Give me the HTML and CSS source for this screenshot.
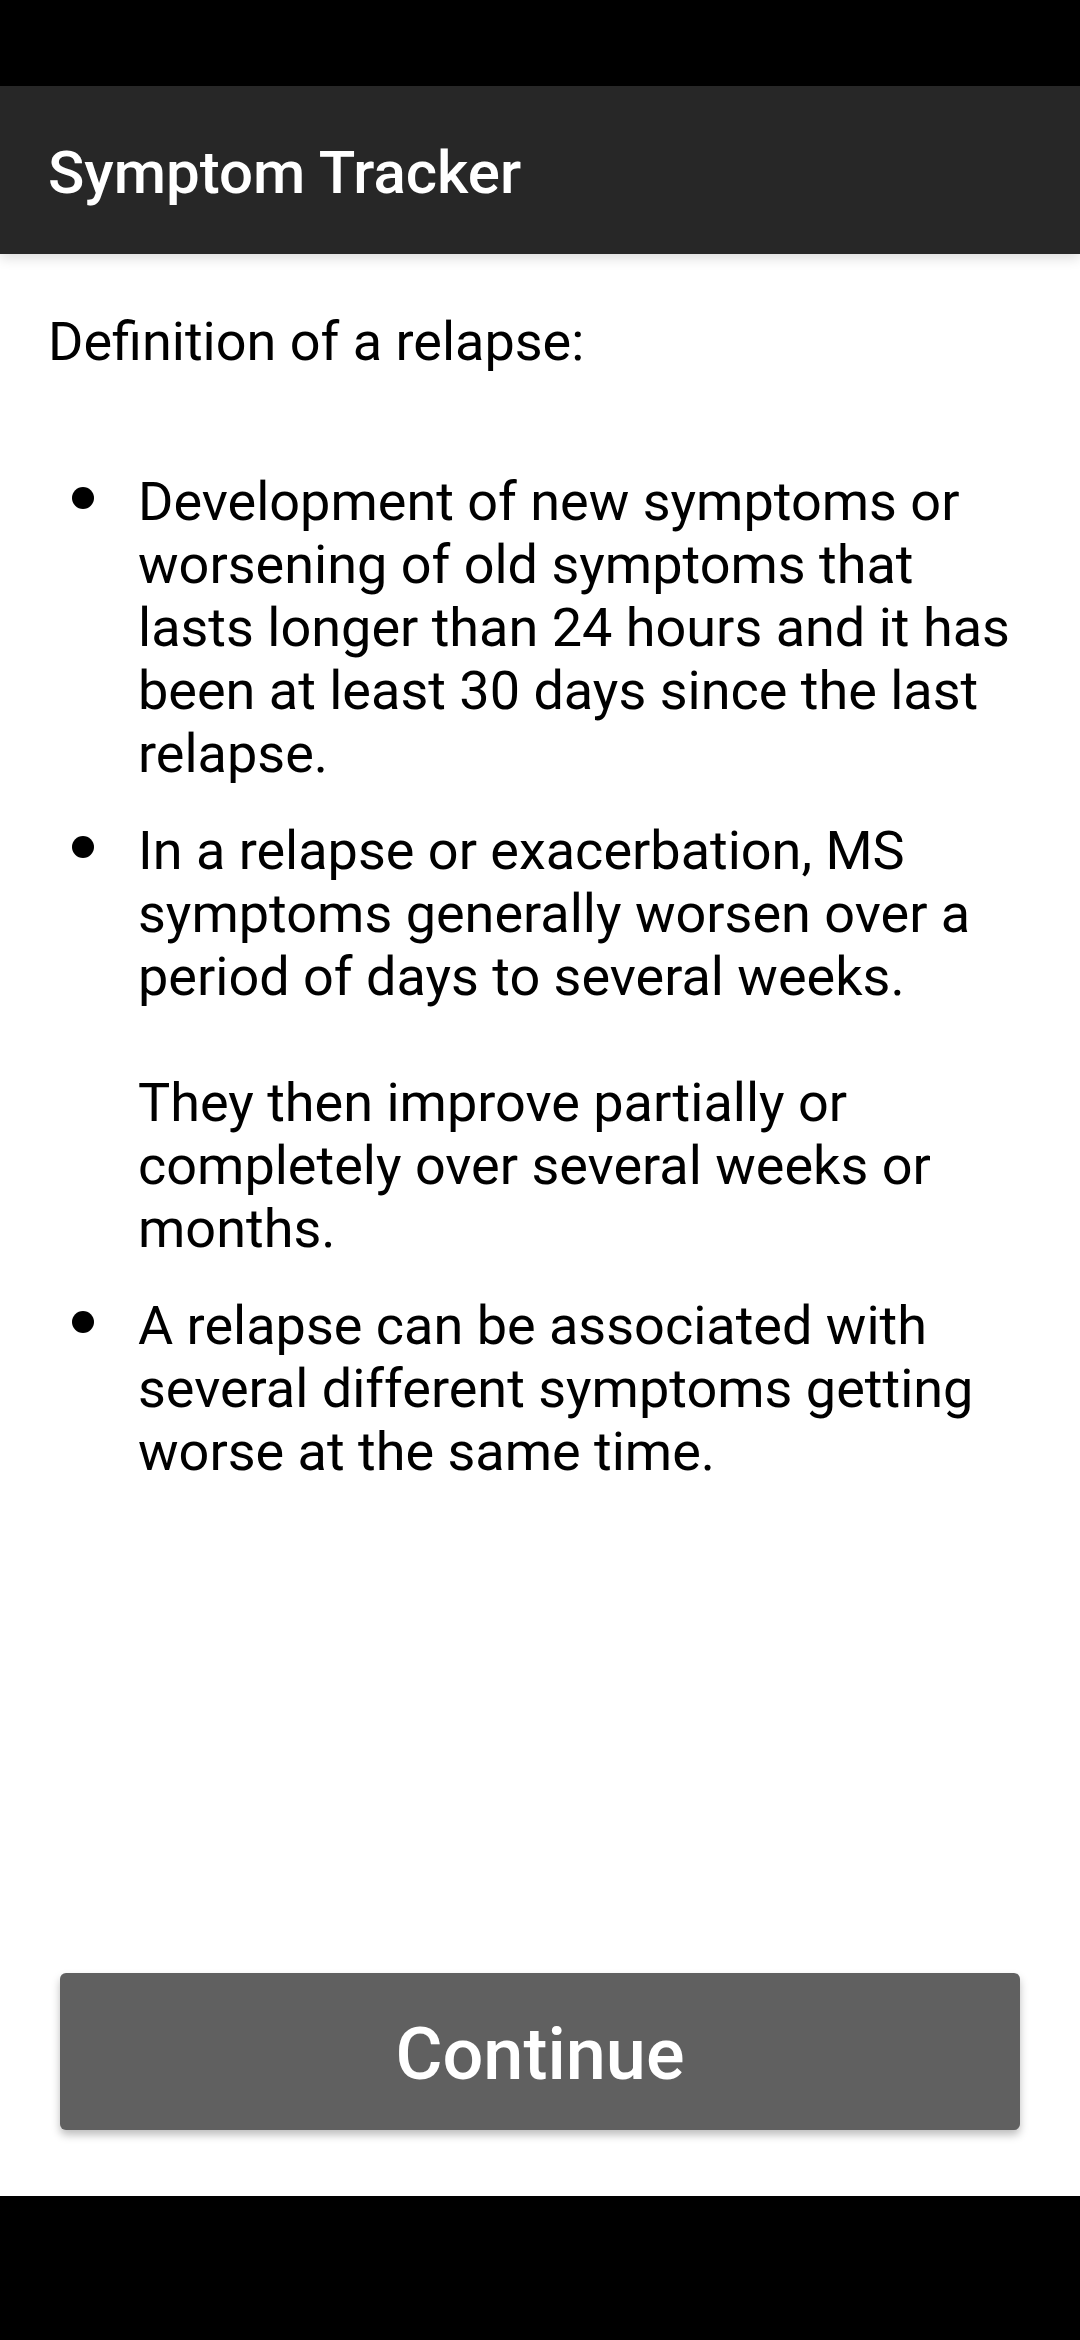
FILE: index.html
```html
<!DOCTYPE html>
<html lang="en">
<head>
<meta charset="utf-8">
<meta name="viewport" content="width=device-width">
<title>Symptom Tracker</title>
<link rel="stylesheet" href="styles.css">
</head>
<body>
<div class="screen">
<header class="app-bar"><h1 class="title">Symptom Tracker</h1></header>
<main class="content">
<p class="intro">Definition of a relapse:</p>
<ul class="list">
<li class="item"><p class="text">Development of new symptoms or worsening of old symptoms that lasts longer than 24 hours and it has been at least 30 days since the last relapse.</p></li>
<li class="item"><p class="text">In a relapse or exacerbation, MS symptoms generally worsen over a period of days to several weeks.</p><p class="text">They then improve partially or completely over several weeks or months.</p></li>
<li class="item"><p class="text">A relapse can be associated with several different symptoms getting worse at the same time.</p></li>
</ul>
<button class="continue" type="button">Continue</button>
</main>
</div>
</body>
</html>
```
FILE: styles.css
```css
* { box-sizing: border-box; }
body { margin: 0; background: #000; color: #000; font-family: Roboto, sans-serif; }
.screen { min-height: 100vh; padding: 86px 0 144px; display: flex; flex-direction: column; }
.app-bar { padding: 52px 48px 46px; background: #272727; box-shadow: 0 4px 12px rgba(0,0,0,.14); z-index: 1; }
.title { margin: 0; color: #fff; font-size: 60px; line-height: 70px; font-weight: 500; }
.content { flex: 1; display: flex; flex-direction: column; background: #fff; padding: 56px 60px 66px 48px; font-size: 54px; line-height: 63px; }
.intro, .text { margin: 0; }
.list { list-style: none; margin: 97px 0 0; padding: 0; display: flex; flex-direction: column; gap: 34px; }
.item { display: grid; grid-template-columns: 90px 1fr; row-gap: 63px; }
.item::before { content: ""; grid-row: 1; grid-column: 1; width: 22px; height: 22px; margin: 17px 0 0 24px; border-radius: 50%; background: #000; }
.text { grid-column: 2; }
.text:first-child { grid-row: 1; }
.continue { margin: auto 0 0 12px; padding: 40px 24px 33px; border: 0; border-radius: 6px; background: #606060; color: #fff; font-family: inherit; font-size: 72px; line-height: 84px; font-weight: 500; box-shadow: 0 5px 9px rgba(0,0,0,.26); }
```
